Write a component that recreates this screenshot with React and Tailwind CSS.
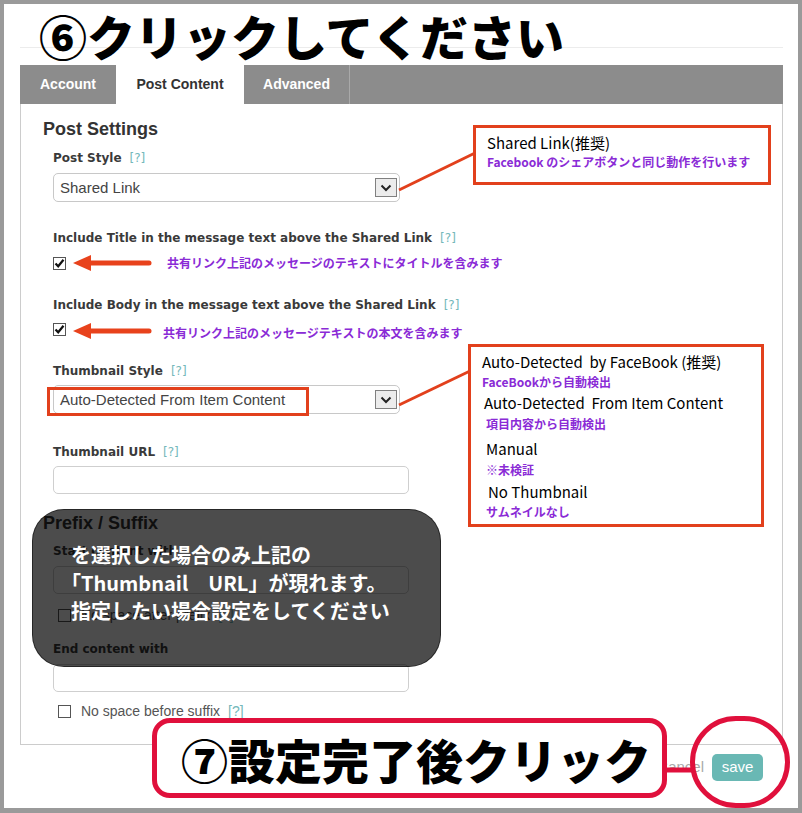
import React from "react";

const ui = { fontFamily: "'Liberation Sans', Arial, sans-serif" };
const label = { fontFamily: "'DejaVu Sans', Verdana, sans-serif" };
const jp = { fontFamily: "'Noto Sans CJK JP', 'Noto Sans', sans-serif" };

const Help = () => <span className="ml-[8px] font-normal text-[#74b8ba]">[?]</span>;

const Label = ({ children, className = "" }) => (
  <div style={label} className={`text-[12px] leading-[16px] font-bold text-[#3a3a3a] ${className}`}>
    {children}
    <Help />
  </div>
);

const Select = ({ value, className = "" }) => (
  <div className={`flex h-[29px] w-[347px] items-center justify-between rounded-[5px] border border-[#c8c8c8] bg-white pl-[6px] pr-[2px] ${className}`}>
    <span style={ui} className="text-[15px] leading-[18px] text-[#444]">{value}</span>
    <span className="flex h-[19px] w-[22px] items-center justify-center border border-[#808080] bg-[#ececec]">
      <svg width="12" height="8" viewBox="0 0 12 8">
        <path d="M1.5 1.5 L6 6 L10.5 1.5" fill="none" stroke="#222" strokeWidth="2" />
      </svg>
    </span>
  </div>
);

const Input = ({ className = "" }) => (
  <div className={`h-[28px] w-[356px] rounded-[5px] border border-[#cfcfcf] bg-white ${className}`} />
);

const Check = ({ checked, className = "" }) => (
  <span className={`flex h-[13px] w-[13px] shrink-0 items-center justify-center border border-[#555] bg-white ${className}`}>
    {checked && (
      <svg width="11" height="11" viewBox="0 0 11 11">
        <path d="M1.5 5.5 L4.2 8.3 L9.5 1.8" fill="none" stroke="#111" strokeWidth="2.2" />
      </svg>
    )}
  </span>
);

const Note = ({ children, className = "" }) => (
  <div style={jp} className={`whitespace-nowrap font-bold text-[#8a2bd6] ${className}`}>{children}</div>
);

const Line = ({ children, className = "" }) => (
  <div style={jp} className={`whitespace-nowrap text-[15px] leading-[20px] text-black ${className}`}>{children}</div>
);

export default function App() {
  return (
    <div className="relative h-[813px] w-[802px] overflow-hidden bg-white p-1">
      {/* page heading strip */}
      <div className="ml-[16px] mr-[15px] h-[44px] border-b border-[#ececec]" />

      {/* tabs */}
      <div style={ui} className="ml-[16px] mr-[15px] mt-[17px] flex h-[39px] bg-[#8c8c8c] text-[14px] font-bold">
        <div className="flex w-[96px] items-center justify-center text-white">Account</div>
        <div className="flex w-[128px] items-center justify-center bg-white text-[#333]">Post Content</div>
        <div className="flex w-[106px] items-center justify-center border-r border-[#a9a9a9] text-white">Advanced</div>
      </div>

      {/* panel */}
      <div className="ml-[16px] mr-[15px] h-[641px] border border-t-0 border-[#cccccc] pl-[22px] pt-[14px]">
        <div style={ui} className="text-[18px] leading-[22px] font-bold text-[#333]">Post Settings</div>
        <div className="pl-[10px]">
          <Label className="mt-[10px]">Post Style</Label>
          <Select value="Shared Link" className="mt-[7px]" />

          <Label className="mt-[28px]">Include Title in the message text above the Shared Link</Label>
          <Check checked className="mt-[11px]" />

          <Label className="mt-[27px]">Include Body in the message text above the Shared Link</Label>
          <Check checked className="mt-[10px]" />

          <Label className="mt-[27px]">Thumbnail Style</Label>
          <Select value="Auto-Detected From Item Content" className="mt-[6px]" />

          <Label className="mt-[30px]">Thumbnail URL</Label>
          <Input className="mt-[6px]" />
        </div>

        <div style={ui} className="mt-[18px] text-[18px] leading-[22px] font-bold text-[#333]">Prefix / Suffix</div>
        <div className="pl-[10px]">
          <div style={label} className="mt-[9px] text-[12px] leading-[16px] font-bold text-[#3a3a3a]">Start content with</div>
          <Input className="mt-[7px]" />
          <div className="mt-[11px] flex items-center gap-[10px] pl-[5px]">
            <Check />
            <span style={ui} className="text-[14px] text-[#555]">No space after prefix<Help /></span>
          </div>
          <div style={label} className="mt-[15px] text-[12px] leading-[16px] font-bold text-[#3a3a3a]">End content with</div>
          <Input className="mt-[7px]" />
          <div className="mt-[9px] flex items-center gap-[10px] pl-[5px]">
            <Check />
            <span style={ui} className="text-[14px] text-[#555]">No space before suffix<Help /></span>
          </div>
        </div>
      </div>

      {/* footer buttons */}
      <div style={ui} className="ml-[16px] mr-[15px] mt-[9px] flex items-center justify-end gap-[8px] pr-[20px]">
        <span className="text-[15px] text-[#aaa]">Cancel</span>
        <span className="flex h-[27px] w-[51px] items-center justify-center rounded-[5px] bg-[#69b8b4] text-[15px] text-white">save</span>
      </div>

      {/* ---- annotations ---- */}
      <div style={jp} className="absolute left-[39px] top-[7px] whitespace-nowrap text-[48px] leading-[56px] font-black text-black">
        ⑥クリックしてください
      </div>

      <svg className="pointer-events-none absolute left-0 top-0" width="802" height="813">
        <line x1="399" y1="190" x2="475" y2="153" stroke="#e2401c" strokeWidth="3" />
        <line x1="399" y1="405" x2="470" y2="371" stroke="#e2401c" strokeWidth="3" />
        <line x1="90" y1="263" x2="149" y2="263" stroke="#e8421c" strokeWidth="5" strokeLinecap="round" />
        <polygon points="73,263 91,255 91,271" fill="#e8421c" />
        <line x1="90" y1="331" x2="149" y2="331" stroke="#e8421c" strokeWidth="5" strokeLinecap="round" />
        <polygon points="73,331 91,323 91,339" fill="#e8421c" />
        <line x1="664" y1="770" x2="694" y2="770" stroke="#e0103c" strokeWidth="5" />
      </svg>

      <Note className="absolute left-[167px] top-[255px] text-[12px] leading-[16px]">共有リンク上記のメッセージのテキストにタイトルを含みます</Note>
      <Note className="absolute left-[163px] top-[325px] text-[12px] leading-[16px]">共有リンク上記のメッセージテキストの本文を含みます</Note>

      <div className="absolute left-[47px] top-[387px] h-[29px] w-[262px] border-[3px] border-[#e2401c]" />

      <div className="absolute left-[473px] top-[125px] h-[60px] w-[298px] border-[3px] border-[#e2401c] bg-white pl-[11px] pt-[5px]">
        <Line>Shared Link(推奨)</Line>
        <Note className="text-[12px] leading-[18px]">Facebook のシェアボタンと同じ動作を行います</Note>
      </div>

      <div className="absolute left-[468px] top-[344px] h-[183px] w-[296px] border-[3px] border-[#e2401c] bg-white pl-[11px] pt-[5px]">
        <Line>Auto-Detected&nbsp;&nbsp;by FaceBook (推奨)</Line>
        <Note className="mt-[1px] text-[12px] leading-[18px]">FaceBookから自動検出</Note>
        <Line className="mt-[2px] pl-[2px]">Auto-Detected&nbsp;&nbsp;From Item Content</Line>
        <Note className="mt-[2px] pl-[4px] text-[12px] leading-[18px]">項目内容から自動検出</Note>
        <Line className="mt-[6px] pl-[4px]">Manual</Line>
        <Note className="mt-[2px] pl-[4px] text-[12px] leading-[18px]">※未検証</Note>
        <Line className="mt-[3px] pl-[6px]">No Thumbnail</Line>
        <Note className="mt-[1px] pl-[4px] text-[12px] leading-[18px]">サムネイルなし</Note>
      </div>

      <div style={jp} className="absolute left-[32px] top-[509px] h-[158px] w-[409px] rounded-[32px] border border-black/50 bg-black/70 pl-[38px] pt-[31px] text-[20px] leading-[28px] font-bold text-white">
        <div>を選択した場合のみ上記の</div>
        <div className="-ml-[10px]">「Thumbnail　URL」が現れます。</div>
        <div>指定したい場合設定をしてください</div>
      </div>

      <div style={jp} className="absolute left-[152px] top-[718px] flex h-[80px] w-[515px] items-center rounded-[18px] border-[5px] border-[#e0103c] bg-white pl-[24px] text-[47px] leading-none font-black text-black">
        ⑦設定完了後クリック
      </div>

      <div className="absolute left-[690px] top-[716px] h-[92px] w-[100px] rounded-full border-[5px] border-[#e0103c]" />

      {/* outer frame */}
      <div className="pointer-events-none absolute inset-0 border-4 border-b-[5px] border-[#9a9a9a]" />
    </div>
  );
}
